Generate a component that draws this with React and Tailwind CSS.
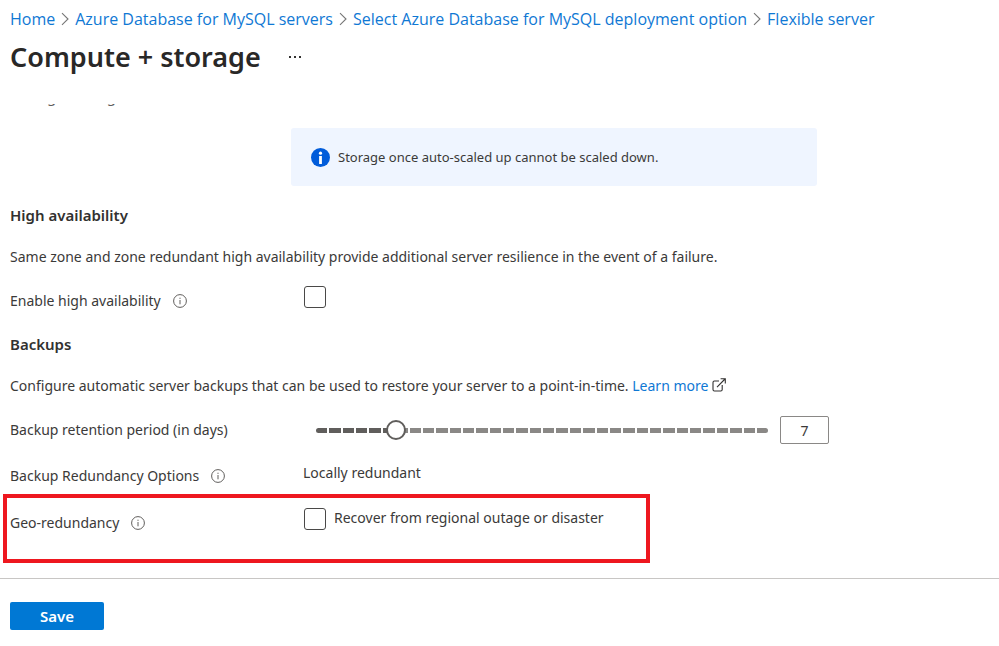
import { useState } from "react";

const MIN_DAYS = 1;
const MAX_DAYS = 35;

const crumbs = [
  "Home",
  "Azure Database for MySQL servers",
  "Select Azure Database for MySQL deployment option",
  "Flexible server",
];

function Chevron() {
  return (
    <svg className="mx-1.5 h-3.5 w-2 shrink-0" viewBox="0 0 8 14" fill="none" stroke="#767676" strokeWidth="1.1" aria-hidden="true">
      <path d="M1 1.2 7 7l-6 5.8" />
    </svg>
  );
}

function InfoButton({ label }) {
  return (
    <button type="button" aria-label={label} className="ml-3 flex shrink-0">
      <svg className="size-3.5" viewBox="0 0 14 14" fill="none" stroke="#605e5c" aria-hidden="true">
        <circle cx="7" cy="7" r="6.4" strokeWidth="1" />
        <path d="M7 6v4.3" strokeWidth="1" />
        <path d="M7 3.7v1.2" strokeWidth="1" />
      </svg>
    </button>
  );
}

function ExternalIcon() {
  return (
    <svg className="ml-1 inline size-3.5 align-[-1px]" viewBox="0 0 14 14" fill="none" stroke="#323130" strokeWidth="1.1" aria-hidden="true">
      <path d="M7 3H2.4Q1 3 1 4.4v7.2Q1 13 2.4 13h6.4q1.4 0 1.4-1.4V7" />
      <path d="M5 9.2 13 1M8.6.8h4.7v4.8" />
    </svg>
  );
}

function Checkbox(props) {
  return (
    <input
      type="checkbox"
      className="size-[22px] shrink-0 appearance-none rounded-[3px] border border-[#4a4948] bg-white checked:bg-[#0078d4]"
      {...props}
    />
  );
}

function DaysSlider({ value, onChange }) {
  const steps = Array.from({ length: MAX_DAYS - MIN_DAYS }, (_, i) => i + MIN_DAYS);
  return (
    <div className="relative flex h-5 min-w-0 flex-1 items-center px-2.5">
      <div className="flex h-[5px] w-full gap-0.5 overflow-hidden rounded-full">
        {steps.map((d) => (
          <span key={d} className={d < value ? "flex-1 bg-[#605e5c]" : "flex-1 bg-[#8a8886]"} />
        ))}
      </div>
      <input
        id="retention"
        type="range"
        min={MIN_DAYS}
        max={MAX_DAYS}
        value={value}
        onChange={(e) => onChange(Number(e.target.value))}
        className="absolute inset-0 m-0 h-5 w-full appearance-none bg-transparent [&::-webkit-slider-thumb]:size-5 [&::-webkit-slider-thumb]:appearance-none [&::-webkit-slider-thumb]:rounded-full [&::-webkit-slider-thumb]:border-2 [&::-webkit-slider-thumb]:border-solid [&::-webkit-slider-thumb]:border-[#605e5c] [&::-webkit-slider-thumb]:bg-white"
      />
    </div>
  );
}

export default function App() {
  const [days, setDays] = useState(7);
  return (
    <div className="min-h-screen bg-white font-['Noto_Sans','Open_Sans',sans-serif] text-sm text-[#3b3a39]">
      <header className="px-2.5 pt-[9px]">
        <nav aria-label="Breadcrumb">
          <ol className="flex font-['Open_Sans','Noto_Sans',sans-serif] text-base leading-5 text-[#0f78d4]">
            {crumbs.map((c, i) => (
              <li key={c} className="flex items-center whitespace-nowrap">
                {i > 0 && <Chevron />}
                <a href="#">{c}</a>
              </li>
            ))}
          </ol>
        </nav>
        <div className="mt-2.5 flex items-center">
          <h1 className="text-[27px] leading-9 font-semibold text-[#292827]">Compute + storage</h1>
          <button type="button" aria-label="More actions" className="ml-7 flex gap-[3px]">
            <span className="size-0.5 bg-[#323130]" />
            <span className="size-0.5 bg-[#323130]" />
            <span className="size-0.5 bg-[#323130]" />
          </button>
        </div>
      </header>

      <main className="pt-[29px]">
        <div className="flex h-0.5 items-end overflow-hidden px-2.5 text-[15px] leading-5 text-[#605e5c]">
          <p>Storage Auto-growth</p>
        </div>

        <div role="note" className="mt-[22px] ml-[291px] flex h-[58px] max-w-[526px] items-center rounded-[3px] bg-[#eff5ff] pl-5 text-[13px]">
          <svg className="mr-2 size-[19px] shrink-0" viewBox="0 0 19 19" aria-hidden="true">
            <circle cx="9.5" cy="9.5" r="9.5" fill="#015cda" />
            <circle cx="9.5" cy="5.2" r="1.6" fill="#fff" />
            <path d="M8.1 8h2.8v8H8.1z" fill="#fff" />
          </svg>
          Storage once auto-scaled up cannot be scaled down.
        </div>

        <section className="px-2.5 pt-[19px]">
          <h2 className="text-[15px] leading-5 font-semibold text-[#323130]">High availability</h2>
          <p className="mt-[22px]">
            Same zone and zone redundant high availability provide additional server resilience in the event of a failure.
          </p>
          <div className="mt-[19px] flex items-start">
            <div className="flex w-[294px] shrink-0 items-center pt-[5px]">
              <label htmlFor="ha">Enable high availability</label>
              <InfoButton label="About high availability" />
            </div>
            <Checkbox id="ha" />
          </div>
        </section>

        <section className="pt-[23px]">
          <div className="px-2.5">
            <h2 className="text-[15px] leading-5 font-semibold text-[#323130]">Backups</h2>
            <p className="mt-[22px]">
              Configure automatic server backups that can be used to restore your server to a point-in-time.{" "}
              <a href="#" className="text-[#0f78d4]">
                Learn more
              </a>
              <ExternalIcon />
            </p>
            <div className="mt-5 flex max-w-[819px] items-center">
              <label htmlFor="retention" className="w-[296px] shrink-0">
                Backup retention period (in days)
              </label>
              <DaysSlider value={days} onChange={setDays} />
              <input
                type="text"
                aria-label="Retention days"
                value={days}
                onChange={(e) => setDays(Number(e.target.value) || MIN_DAYS)}
                className="ml-0.5 h-7 w-[49px] rounded-xs border border-[#8a8886] text-center"
              />
            </div>
            <div className="mt-[19px] flex items-start">
              <div className="flex w-[293px] shrink-0 items-center pt-[3px]">
                <span>Backup Redundancy Options</span>
                <InfoButton label="About backup redundancy options" />
              </div>
              <span>Locally redundant</span>
            </div>
          </div>

          <div className="mt-2 ml-[3px] flex h-[69px] max-w-[647px] items-start border-4 border-[#ee171f] pt-2.5 pl-[3px]">
            <div className="flex w-[294px] shrink-0 items-center pt-[5px]">
              <span>Geo-redundancy</span>
              <InfoButton label="About geo-redundancy" />
            </div>
            <Checkbox id="geo" />
            <label htmlFor="geo" className="ml-2">
              Recover from regional outage or disaster
            </label>
          </div>
        </section>
      </main>

      <footer className="mt-[15px] border-t border-[#c8c6c4] px-2.5 pt-[23px]">
        <button type="button" className="h-7 w-[94px] rounded-xs bg-[#0078d4] text-[15px] leading-5 font-semibold text-white">
          Save
        </button>
      </footer>
    </div>
  );
}
